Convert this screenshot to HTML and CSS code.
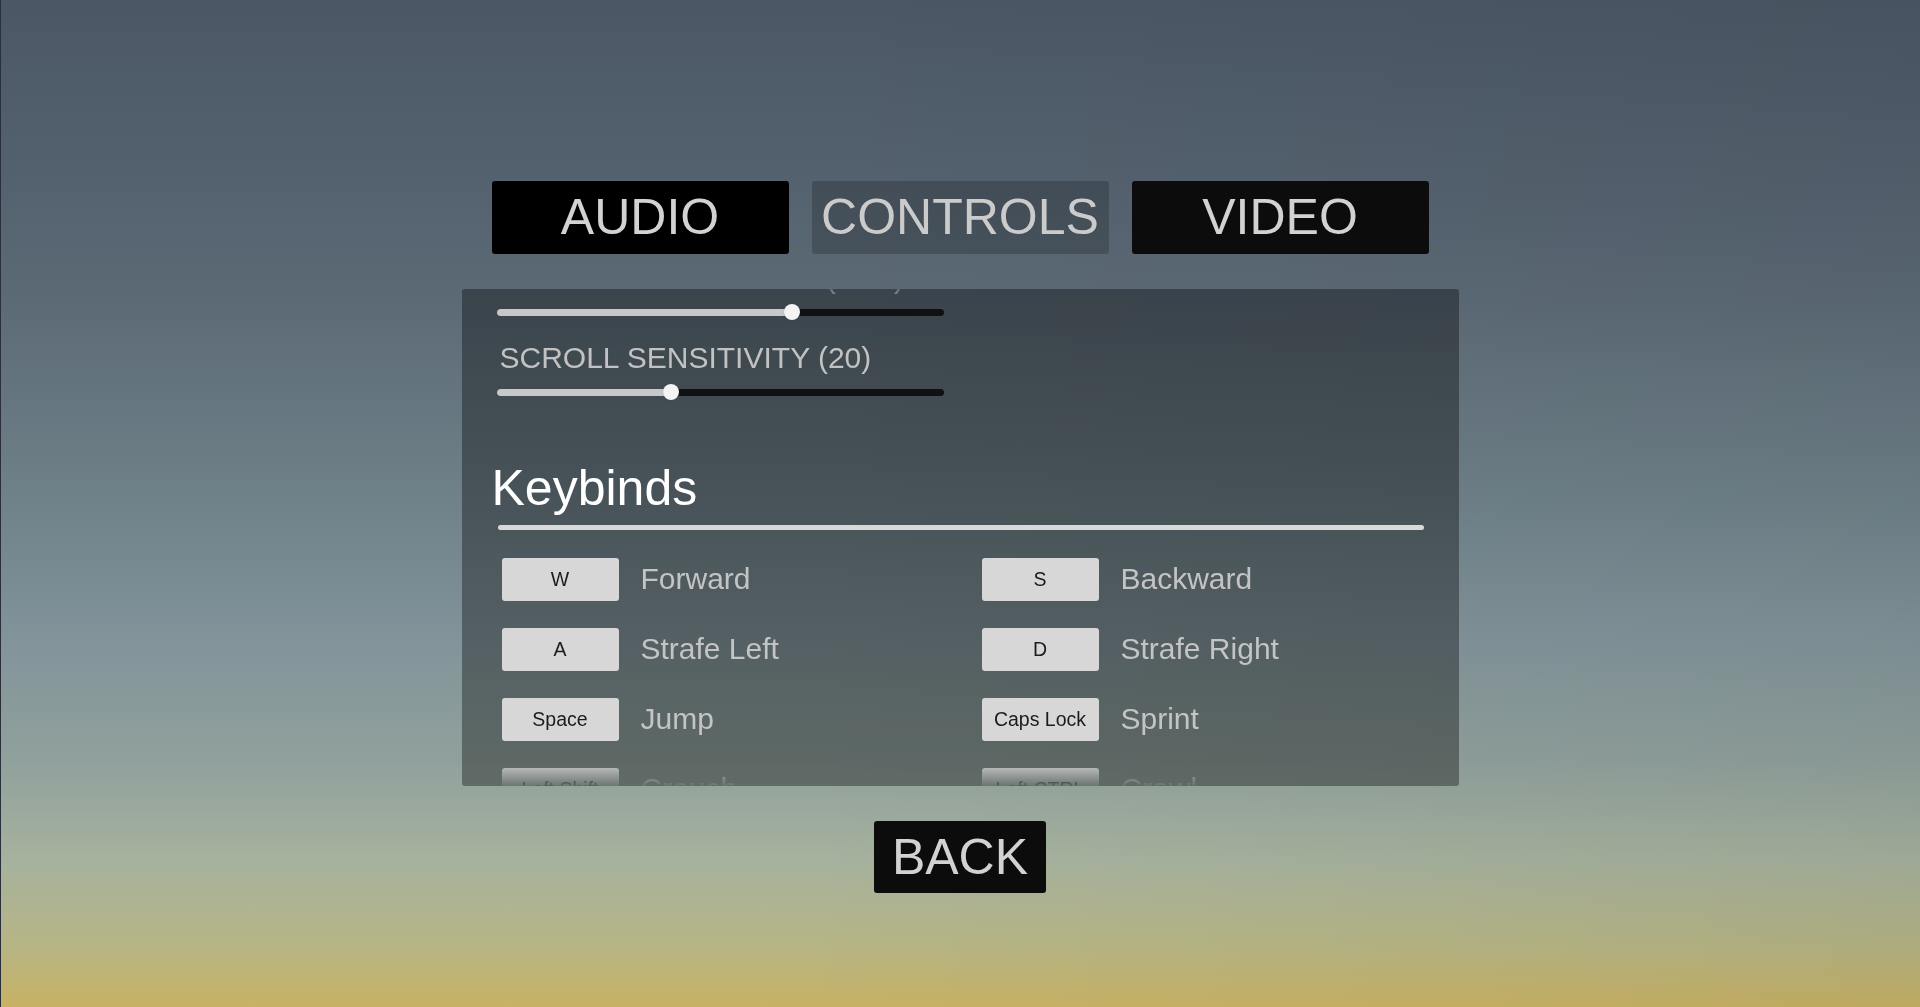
FILE: index.html
```html
<!DOCTYPE html>
<html lang="en">
<head>
<meta charset="utf-8">
<title>Settings - Controls</title>
<link rel="stylesheet" href="styles.css">
</head>
<body>
<div class="screen">
  <nav class="tabs">
    <button class="tab tab-audio">AUDIO</button>
    <button class="tab tab-active">CONTROLS</button>
    <button class="tab tab-video">VIDEO</button>
  </nav>

  <section class="panel">
    <div class="scroll">
      <div class="setting">
        <div class="setting-label">CAMERA SENSITIVITY (0.75)</div>
        <div class="slider">
          <div class="track">
            <div class="fill" style="width:66%"></div>
            <div class="thumb" style="left:66%"></div>
          </div>
        </div>
      </div>
      <div class="setting">
        <div class="setting-label">SCROLL SENSITIVITY (20)</div>
        <div class="slider">
          <div class="track">
            <div class="fill" style="width:39%"></div>
            <div class="thumb" style="left:39%"></div>
          </div>
        </div>
      </div>

      <h2 class="heading">Keybinds</h2>
      <div class="divider"></div>

      <div class="binds">
        <div class="bind"><span class="key">W</span><span class="action">Forward</span></div>
        <div class="bind"><span class="key">S</span><span class="action">Backward</span></div>
        <div class="bind"><span class="key">A</span><span class="action">Strafe Left</span></div>
        <div class="bind"><span class="key">D</span><span class="action">Strafe Right</span></div>
        <div class="bind"><span class="key">Space</span><span class="action">Jump</span></div>
        <div class="bind"><span class="key">Caps Lock</span><span class="action">Sprint</span></div>
        <div class="bind"><span class="key">Left Shift</span><span class="action">Crouch</span></div>
        <div class="bind"><span class="key">Left CTRL</span><span class="action">Crawl</span></div>
      </div>
    </div>
  </section>

  <button class="back">BACK</button>
</div>
</body>
</html>
```

FILE: styles.css
```css
* { box-sizing: border-box; }

html, body {
  margin: 0;
  padding: 0;
  height: 1007px;
  overflow: hidden;
}

body {
  font-family: "Liberation Sans", Arial, sans-serif;
  background:
    linear-gradient(to right, rgba(0,0,0,0) 40%, rgba(0,0,0,0.05) 100%),
    linear-gradient(to bottom,
      #4b5765 0px,
      #54616e 180px,
      #5c6a76 300px,
      #6f8189 500px,
      #82949a 640px,
      #90a09c 760px,
      #a6b29e 860px,
      #b7b585 945px,
      #c8b264 1007px);
}

.screen {
  height: 1007px;
  display: flex;
  flex-direction: column;
  align-items: center;
  padding-top: 181px;
  box-shadow: inset 1px 0 0 #2a3039;
}

.tabs {
  display: flex;
  gap: 23px;
}

.tab {
  width: 297px;
  height: 73px;
  border: none;
  border-radius: 3px;
  font-family: inherit;
  font-size: 50px;
  line-height: 73px;
  padding: 0;
  color: #d2d2d2;
  cursor: pointer;
}

.tab-audio { background: #000; }
.tab-video { background: #0c0c0c; }
.tab-active {
  background: rgba(0, 0, 0, 0.2);
  color: #cbcbcb;
}

.panel {
  margin-top: 35px;
  width: 997px;
  height: 497px;
  background: rgba(0, 0, 0, 0.35);
  border-radius: 3px;
  overflow: hidden;
}

.scroll {
  margin-top: -28px;
  height: 525px;
  -webkit-mask-image: linear-gradient(to bottom, transparent 22px, #000 42px, #000 calc(100% - 26px), rgba(0,0,0,0.1) 100%);
  mask-image: linear-gradient(to bottom, transparent 22px, #000 42px, #000 calc(100% - 26px), rgba(0,0,0,0.1) 100%);
}

.setting {
  margin-left: 35px;
  width: 447px;
}

.setting + .setting { margin-top: 19px; }

.setting-label {
  font-size: 30px;
  line-height: 34px;
  padding-left: 3px;
  color: #c2c2c2;
  white-space: nowrap;
}

.slider {
  margin-top: 7px;
  height: 20px;
  display: flex;
  align-items: center;
}

.track {
  position: relative;
  flex: 1;
  height: 7px;
  border-radius: 4px;
  background: #111;
}

.fill {
  height: 100%;
  border-radius: 4px;
  background: #c8c8c8;
}

.thumb {
  position: absolute;
  top: 50%;
  width: 16px;
  height: 16px;
  border-radius: 50%;
  background: #f4f4f4;
  box-shadow: 0 0 1px rgba(0,0,0,0.4);
  transform: translate(-50%, -50%);
}

.heading {
  margin: 57px 0 0 30px;
  font-size: 50px;
  line-height: 58px;
  font-weight: normal;
  color: #fff;
}

.divider {
  margin: 8px 0 0 36px;
  width: 926px;
  height: 5px;
  border-radius: 3px;
  background: #d9d9d9;
}

.binds {
  margin: 28px 0 0 40px;
  display: grid;
  grid-template-columns: 480px 480px;
  row-gap: 27px;
}

.bind {
  display: flex;
  align-items: center;
  gap: 22px;
}

.key {
  width: 117px;
  height: 43px;
  border-radius: 3px;
  background: #d7d7d7;
  color: #1c1c1c;
  font-size: 19.5px;
  display: flex;
  align-items: center;
  justify-content: center;
  white-space: nowrap;
}

.action {
  font-size: 30px;
  line-height: 34px;
  margin-top: -2px;
  color: #c4c4c4;
  white-space: nowrap;
}

.back {
  margin-top: 35px;
  width: 172px;
  height: 72px;
  border: none;
  border-radius: 3px;
  background: #0c0c0c;
  color: #d2d2d2;
  font-family: inherit;
  font-size: 50px;
  line-height: 72px;
  padding: 0;
  cursor: pointer;
}
```
